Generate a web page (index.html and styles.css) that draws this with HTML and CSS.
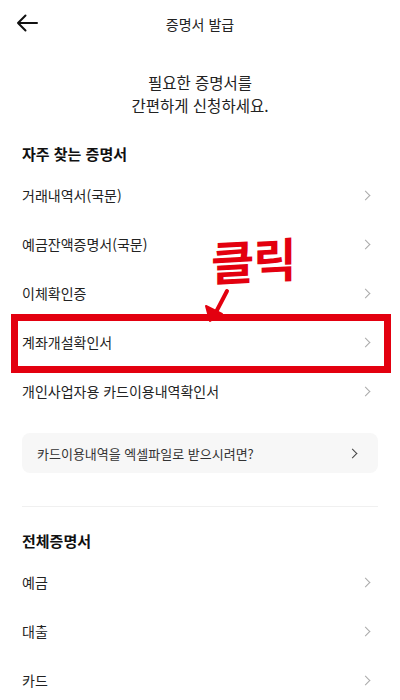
FILE: index.html
```html
<!DOCTYPE html>
<html lang="ko">
<head>
<meta charset="utf-8">
<link rel="stylesheet" href="styles.css">
</head>
<body>
<div class="page">
  <header class="topbar">
    <svg class="back" width="22" height="18" viewBox="0 0 22 18"><path d="M21 9H2M9.5 1.5L2 9l7.5 7.5" fill="none" stroke="#111" stroke-width="2" stroke-linecap="round" stroke-linejoin="round"/></svg>
    <h1 class="title">증명서 발급</h1>
  </header>

  <div class="intro">
    <p class="intro-line">필요한 증명서를</p>
    <p class="intro-line">간편하게 신청하세요.</p>
  </div>

  <section class="section">
    <h2 class="sec-title">자주 찾는 증명서</h2>
    <ul class="list">
      <li class="row"><span>거래내역서(국문)</span><i class="chev"></i></li>
      <li class="row"><span>예금잔액증명서(국문)</span><i class="chev"></i></li>
      <li class="row"><span>이체확인증</span><i class="chev"></i></li>
      <li class="row highlight"><span>계좌개설확인서</span><i class="chev"></i><b class="redbox"></b></li>
      <li class="row"><span>개인사업자용 카드이용내역확인서</span><i class="chev"></i></li>
    </ul>
    <div class="banner"><span>카드이용내역을 엑셀파일로 받으시려면?</span><i class="chev dark"></i></div>
  </section>

  <hr class="divider">

  <section class="section">
    <h2 class="sec-title all">전체증명서</h2>
    <ul class="list">
      <li class="row"><span>예금</span><i class="chev"></i></li>
      <li class="row"><span>대출</span><i class="chev"></i></li>
      <li class="row"><span>카드</span><i class="chev"></i></li>
    </ul>
  </section>

  <div class="click-label">클릭</div>
  <svg class="click-arrow" width="40" height="40" viewBox="0 0 40 40"><path d="M27 4L15 27" stroke="#e3000f" stroke-width="4" stroke-linecap="round" fill="none"/><path d="M6 19L10 34L22 27Z" fill="#e3000f" stroke="#e3000f" stroke-width="2" stroke-linejoin="round"/></svg>
</div>
</body>
</html>
```

FILE: styles.css
```css
* { box-sizing: border-box; }
html, body { margin: 0; padding: 0; background: #fff; }
body {
  font-family: "Noto Sans CJK KR", "Noto Sans", sans-serif;
  color: #222;
  width: 400px;
  overflow: hidden;
}
.page { position: relative; height: 700px; overflow: hidden; }
.topbar {
  height: 48px;
  display: flex;
  align-items: center;
  justify-content: center;
  position: relative;
}
.back { position: absolute; left: 16px; top: 14px; }
.title { margin: 0; font-size: 14px; font-weight: 400; color: #222; }
.intro {
  margin-top: 23px;
  display: flex;
  flex-direction: column;
  text-align: center;
}
.intro-line {
  margin: 0;
  font-size: 15.5px;
  line-height: 22.5px;
  color: #222;
}
.section { padding: 0 22px; }
.sec-title {
  margin: 28px 0 0;
  font-size: 15px;
  line-height: 20px;
  font-weight: 700;
  color: #111;
}
.sec-title.all { margin-top: 24px; }
.list { list-style: none; margin: 6.5px 0 0; padding: 0; }
.row {
  position: relative;
  height: 49px;
  display: flex;
  align-items: center;
  justify-content: space-between;
  font-size: 14px;
  color: #222;
}
.chev {
  width: 7px;
  height: 7px;
  border-right: 1.2px solid #aaa;
  border-top: 1.2px solid #aaa;
  transform: rotate(45deg);
  margin-right: 9px;
}
.chev.dark { border-color: #444; margin-right: 22px; }
.redbox {
  position: absolute;
  left: -11px;
  right: -13px;
  top: -4px;
  bottom: -6px;
  border: 7px solid #e3000f;
}
.banner {
  margin-top: 17.5px;
  height: 40px;
  background: #f7f7f7;
  border-radius: 8px;
  display: flex;
  align-items: center;
  justify-content: space-between;
  padding-left: 15px;
  font-size: 13px;
  color: #333;
}
.divider {
  margin: 33px 22px 0;
  border: 0;
  height: 1px;
  background: #f0f0f0;
}
.click-label {
  position: absolute;
  left: 211px;
  top: 231px;
  font-size: 47px;
  line-height: 56px;
  font-weight: 700;
  color: #e3000f;
  transform: skewY(-3deg);
  letter-spacing: -1px;
}
.click-arrow { position: absolute; left: 200px; top: 287px; }
```
